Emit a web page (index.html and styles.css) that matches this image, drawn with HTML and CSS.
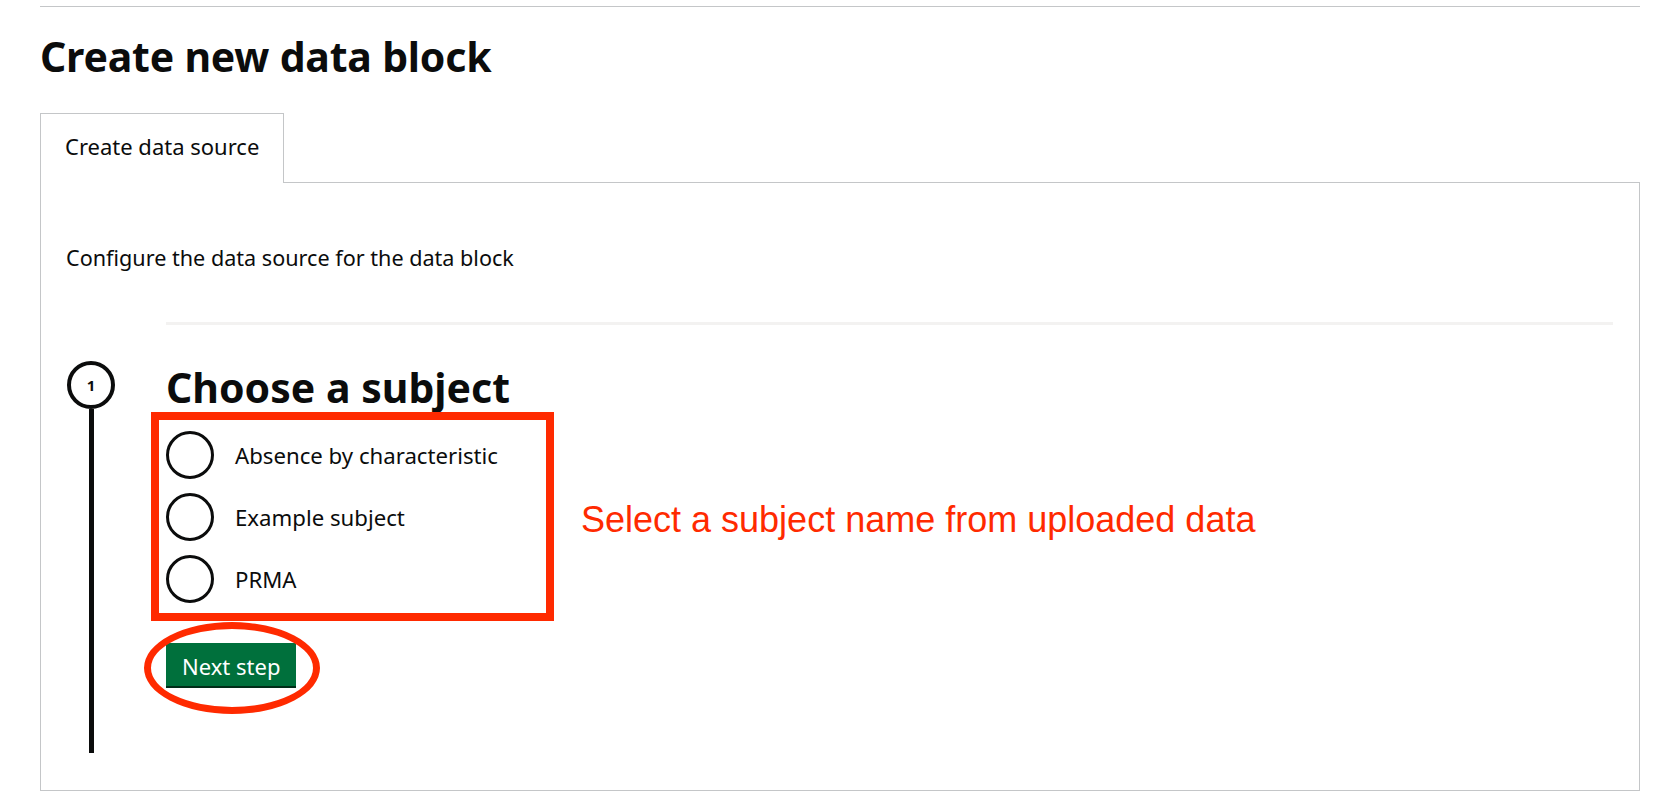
FILE: index.html
```html
<!DOCTYPE html>
<html lang="en">
<head>
<meta charset="utf-8">
<title>Create new data block</title>
<link rel="stylesheet" href="styles.css">
</head>
<body>
<div class="page">
  <header class="page-header">
    <h1 class="page-title">Create new data block</h1>
  </header>
  <div class="tabs">
    <div class="tab-list"><span class="tab">Create data source</span></div>
    <div class="tab-panel">
      <p class="intro">Configure the data source for the data block</p>
      <div class="step">
        <div class="step-rail">
          <span class="step-number">1</span>
          <span class="step-line"></span>
        </div>
        <div class="step-body">
          <h2 class="step-title">Choose a subject</h2>
          <div class="annotated-row">
            <div class="callout-box">
              <div class="radios">
                <label class="radio"><span class="radio-circle"></span><span class="radio-label">Absence by characteristic</span></label>
                <label class="radio"><span class="radio-circle"></span><span class="radio-label">Example subject</span></label>
                <label class="radio"><span class="radio-circle"></span><span class="radio-label">PRMA</span></label>
              </div>
            </div>
            <p class="annotation-text">Select a subject name from uploaded data</p>
          </div>
          <div class="button-wrap">
            <button class="button" type="button">Next step</button>
            <span class="ellipse-mark"></span>
          </div>
        </div>
      </div>
    </div>
  </div>
</div>
</body>
</html>
```

FILE: styles.css
```css
html, body {
  margin: 0;
  padding: 0;
  background: #ffffff;
}

body {
  font-family: "Noto Sans", "Open Sans", Arial, sans-serif;
  color: #0b0c0c;
}

.page {
  padding: 6px 28px 0 40px;
}

.page-header {
  border-top: 1px solid #c4c6c8;
}

.page-title {
  margin: 27px 0 34px;
  font-size: 41px;
  line-height: 1.1;
  font-weight: 700;
  letter-spacing: -0.2px;
}

.tab-list {
  display: flex;
}

.tab {
  position: relative;
  z-index: 1;
  display: block;
  margin-bottom: -1px;
  padding: 20px 24px 24px 24px;
  border: 1px solid #c4c6c8;
  border-bottom: 0;
  background: #ffffff;
  font-size: 22px;
  line-height: 25px;
}

.tab-panel {
  border: 1px solid #c4c6c8;
  padding: 62px 26px 37px 25px;
}

.intro {
  margin: 0 0 52px;
  font-size: 21.6px;
  line-height: 25px;
}

.step {
  display: grid;
  grid-template-columns: 50px 1fr;
  column-gap: 50px;
}

.step-rail {
  display: flex;
  flex-direction: column;
  align-items: center;
  padding-top: 39px;
}

.step-number {
  box-sizing: border-box;
  width: 48px;
  height: 48px;
  border: 4px solid #0b0c0c;
  border-radius: 50%;
  display: flex;
  align-items: center;
  justify-content: center;
  font-size: 15px;
  font-weight: 700;
}

.step-line {
  flex: 1;
  width: 5px;
  background: #0b0c0c;
}

.step-body {
  border-top: 3px solid #f3f2f1;
  padding: 40px 0 67px;
}

.step-title {
  margin: 0 0 2px;
  font-size: 41px;
  line-height: 1.1;
  font-weight: 700;
}

.annotated-row {
  display: flex;
  align-items: center;
  gap: 27px;
}

.callout-box {
  box-sizing: border-box;
  width: 403px;
  margin-left: -15px;
  border: 8px solid #ff2a00;
  padding: 11px 16px 10px 7px;
}

.radios {
  display: flex;
  flex-direction: column;
  gap: 14px;
}

.radio {
  display: flex;
  align-items: center;
  gap: 21px;
}

.radio-circle {
  box-sizing: border-box;
  width: 48px;
  height: 48px;
  flex: none;
  border: 3px solid #0b0c0c;
  border-radius: 50%;
}

.radio-label {
  font-size: 22.2px;
  line-height: 25px;
}

.annotation-text {
  margin: 0;
  padding-top: 6px;
  font-family: "Liberation Sans", Arial, sans-serif;
  font-size: 36px;
  line-height: 1.15;
  color: #ff2a00;
}

.button-wrap {
  position: relative;
  width: max-content;
  margin-top: 22px;
}

.button {
  display: block;
  margin: 0;
  padding: 11px 16px 7px;
  border: 0;
  border-radius: 0;
  background: #00703c;
  box-shadow: 0 2px 0 #002d18;
  color: #ffffff;
  font-family: "Noto Sans", "Open Sans", Arial, sans-serif;
  font-size: 22px;
  line-height: 25px;
}

.ellipse-mark {
  position: absolute;
  left: -22px;
  right: -24px;
  top: -21px;
  bottom: -28px;
  border: 7px solid #ff2a00;
  border-radius: 50%;
  pointer-events: none;
}
```
